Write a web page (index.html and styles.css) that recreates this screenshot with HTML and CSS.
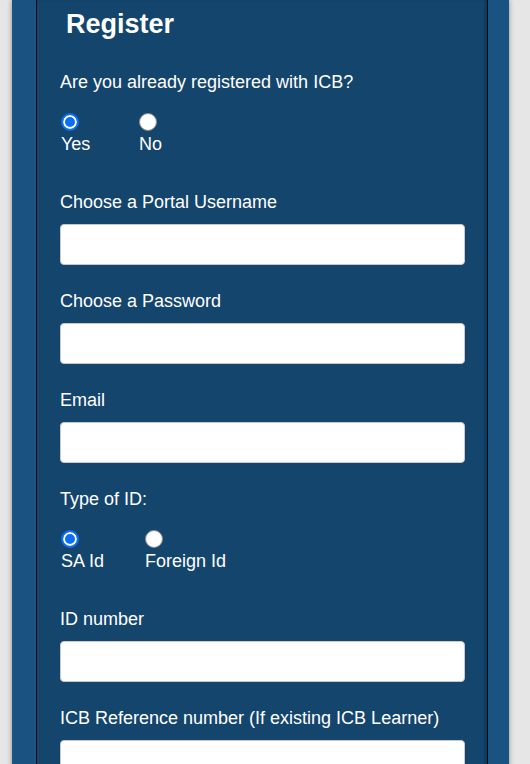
FILE: index.html
```html
<!DOCTYPE html>
<html lang="en">
<head>
<meta charset="utf-8">
<title>Register</title>
<link rel="stylesheet" href="styles.css">
</head>
<body>
<div class="frame">
  <main class="panel">
    <h1 class="title">Register</h1>
    <form class="form">
      <div class="group">
        <div class="label">Are you already registered with ICB?</div>
        <div class="options options--reg">
          <label class="option"><input class="radio" type="radio" name="reg" checked><span>Yes</span></label>
          <label class="option"><input class="radio" type="radio" name="reg"><span>No</span></label>
        </div>
      </div>
      <div class="field">
        <label class="label">Choose a Portal Username</label>
        <input class="text" type="text">
      </div>
      <div class="field">
        <label class="label">Choose a Password</label>
        <input class="text" type="password">
      </div>
      <div class="field">
        <label class="label">Email</label>
        <input class="text" type="email">
      </div>
      <div class="group">
        <div class="label">Type of ID:</div>
        <div class="options options--id">
          <label class="option"><input class="radio" type="radio" name="idtype" checked><span>SA Id</span></label>
          <label class="option"><input class="radio" type="radio" name="idtype"><span>Foreign Id</span></label>
        </div>
      </div>
      <div class="field">
        <label class="label">ID number</label>
        <input class="text" type="text">
      </div>
      <div class="field">
        <label class="label">ICB Reference number (If existing ICB Learner)</label>
        <input class="text" type="text">
      </div>
    </form>
  </main>
</div>
</body>
</html>
```
FILE: styles.css
```css
html, body {
  margin: 0;
  padding: 0;
  height: 100%;
  overflow: hidden;
}
body {
  background: #e6e6e6;
  font-family: "Liberation Sans", Arial, sans-serif;
  color: #fff;
}
.frame {
  margin-left: 12px;
  width: 497px;
  min-height: 100%;
  background: #1a5282;
  box-shadow: 0 0 5px rgba(0, 0, 0, 0.4);
  display: flex;
}
.panel {
  margin-left: 24px;
  border-left: 1px solid #050a10;
  border-right: 1px solid #050a10;
  background: #14456d;
  box-shadow: inset -3px 0 4px -2px rgba(0, 0, 0, 0.35);
  padding: 8px 22px 0 23px;
  box-sizing: content-box;
  width: 405px;
}
.title {
  margin: 0 0 0 6px;
  font-size: 27px;
  line-height: 32px;
  font-weight: bold;
}
.form {
  margin-top: 32px;
  display: flex;
  flex-direction: column;
}
.label {
  display: block;
  font-size: 18px;
  line-height: 20px;
}
.group {
  display: flex;
  flex-direction: column;
  margin-bottom: 38px;
}
.options {
  display: flex;
  margin-top: 21px;
}
.options--reg .option { min-width: 78px; }
.options--id .option { min-width: 84px; }
.option {
  display: flex;
  flex-direction: column;
  align-items: flex-start;
  font-size: 18px;
  line-height: 20px;
}
.option span {
  margin-top: 3px;
  margin-left: 1px;
}
.radio {
  appearance: none;
  -webkit-appearance: none;
  width: 18px;
  height: 18px;
  margin: 0 0 0 1px;
  border-radius: 50%;
  border: 1.5px solid #8a8a8a;
  background: #fff;
  box-sizing: border-box;
}
.radio:checked {
  border: 2px solid #0b6ef5;
  background: #0b6ef5;
  box-shadow: inset 0 0 0 2px #fff;
}
.field {
  display: flex;
  flex-direction: column;
  margin-bottom: 26px;
}
.text {
  margin-top: 12px;
  height: 41px;
  width: 405px;
  box-sizing: border-box;
  border: 1px solid #c9c9c9;
  border-radius: 4px;
  background: #fff;
  padding: 0 8px;
  font: inherit;
  font-size: 16px;
}
```
